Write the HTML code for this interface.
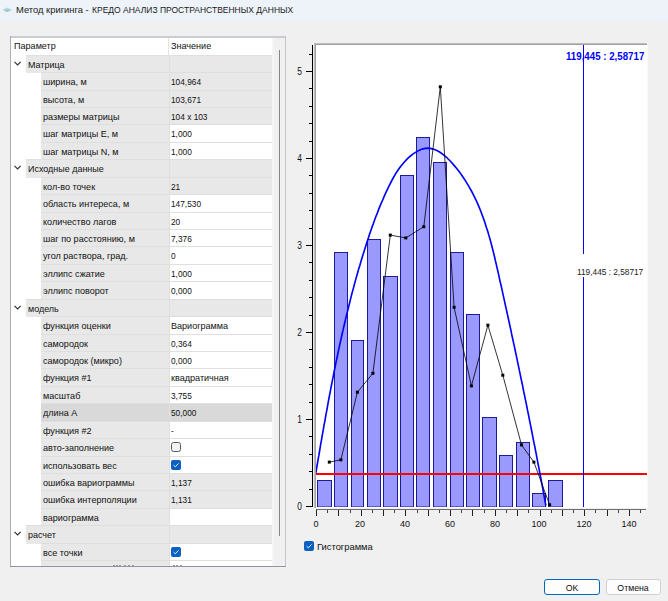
<!DOCTYPE html>
<html><head><meta charset="utf-8"><style>
*{margin:0;padding:0;box-sizing:border-box}
html,body{width:668px;height:601px;overflow:hidden;background:#f0f0f0;font-family:"Liberation Sans", sans-serif;color:#1a1a1a}
.abs{position:absolute}
.t{position:absolute;white-space:nowrap}
</style></head><body>

<div class="abs" style="left:0;top:0;width:668px;height:21px;background:#eef3f9"></div>
<svg class="abs" style="left:0;top:0" width="20" height="20"><path d="M2.6 9.7 L7.2 7.4 L11.8 9.7 L7.2 12 Z" fill="#b5d8dc"/><path d="M2.6 9.7 L11.8 9.7 L7.2 12 Z" fill="#98c6cc"/></svg>
<div class="t" style="left:16.30px;top:4.50px;font-size:9.8px;line-height:9.8px;color:#1a1a1a;font-weight:normal;transform:scaleX(0.957);transform-origin:0 0;">Метод кригинга -</div>
<div class="t" style="left:91.60px;top:4.50px;font-size:9.8px;line-height:9.8px;color:#1a1a1a;font-weight:normal;transform:scaleX(0.868);transform-origin:0 0;">КРЕДО АНАЛИЗ ПРОСТРАНСТВЕННЫХ ДАННЫХ</div>
<div class="abs" style="left:10px;top:36px;width:276px;height:531px;background:#ffffff"></div>
<div class="abs" style="left:10px;top:36px;width:276px;height:2px;background:#c9ccd1"></div>
<div class="abs" style="left:10px;top:36px;width:1px;height:531px;background:#a9acb1"></div>
<div class="abs" style="left:285px;top:36px;width:1px;height:531px;background:#c3c6cb"></div>
<div class="abs" style="left:10px;top:566px;width:276px;height:1px;background:#91959c"></div>
<div class="abs" style="left:272px;top:38px;width:13px;height:528px;background:#f0f0f0"></div>
<div class="abs" style="left:272px;top:38px;width:2px;height:528px;background:#f5f5f5"></div>
<div class="abs" style="left:279px;top:50px;width:1px;height:486px;background:#858585"></div>
<div class="abs" style="left:0;top:0;width:272px;height:566px;overflow:hidden">
<div class="abs" style="left:168px;top:38px;width:1px;height:17px;background:#e3e3e3"></div>
<div class="t" style="left:13.60px;top:41.00px;font-size:9.8px;line-height:9.8px;color:#111;font-weight:normal;transform:scaleX(0.925);transform-origin:0 0;">Параметр</div>
<div class="t" style="left:171.00px;top:41.00px;font-size:9.8px;line-height:9.8px;color:#111;font-weight:normal;transform:scaleX(0.925);transform-origin:0 0;">Значение</div>
<div class="abs" style="left:26px;top:55px;width:246px;height:1px;background:#dfdfdf"></div>
<div class="abs" style="left:26px;top:56px;width:143px;height:16px;background:#e8e8e8"></div>
<div class="abs" style="left:26px;top:72px;width:15px;height:1px;background:#e8e8e8"></div>
<div class="abs" style="left:169px;top:55px;width:1px;height:17px;background:#dfdfdf"></div>
<div class="abs" style="left:170px;top:56px;width:102px;height:16px;background:#e8e8e8"></div>
<svg class="abs" style="left:13px;top:60px" width="10" height="8"><path d="M1.5 1.8 L4.6 4.9 L7.7 1.8" stroke="#333" stroke-width="1.2" fill="none"/></svg>
<div class="t" style="left:27.90px;top:59.60px;font-size:9.8px;line-height:9.8px;color:#111;font-weight:normal;transform:scaleX(0.915);transform-origin:0 0;">Матрица</div>
<div class="abs" style="left:41px;top:72px;width:231px;height:1px;background:#dfdfdf"></div>
<div class="abs" style="left:41px;top:73px;width:128px;height:17px;background:#e8e8e8"></div>
<div class="abs" style="left:169px;top:72px;width:1px;height:18px;background:#dfdfdf"></div>
<div class="abs" style="left:170px;top:73px;width:102px;height:17px;background:#e8e8e8"></div>
<div class="t" style="left:43.00px;top:76.60px;font-size:9.8px;line-height:9.8px;color:#111;font-weight:normal;transform:scaleX(0.925);transform-origin:0 0;">ширина, м</div>
<div class="t" style="left:171.30px;top:76.60px;font-size:9.8px;line-height:9.8px;color:#111;font-weight:normal;transform:scaleX(0.848);transform-origin:0 0;">104,964</div>
<div class="abs" style="left:41px;top:90px;width:231px;height:1px;background:#dfdfdf"></div>
<div class="abs" style="left:41px;top:91px;width:128px;height:16px;background:#e8e8e8"></div>
<div class="abs" style="left:169px;top:90px;width:1px;height:17px;background:#dfdfdf"></div>
<div class="abs" style="left:170px;top:91px;width:102px;height:16px;background:#e8e8e8"></div>
<div class="t" style="left:43.00px;top:94.60px;font-size:9.8px;line-height:9.8px;color:#111;font-weight:normal;transform:scaleX(0.925);transform-origin:0 0;">высота, м</div>
<div class="t" style="left:171.30px;top:94.60px;font-size:9.8px;line-height:9.8px;color:#111;font-weight:normal;transform:scaleX(0.848);transform-origin:0 0;">103,671</div>
<div class="abs" style="left:41px;top:107px;width:231px;height:1px;background:#dfdfdf"></div>
<div class="abs" style="left:41px;top:108px;width:128px;height:16px;background:#e8e8e8"></div>
<div class="abs" style="left:169px;top:107px;width:1px;height:17px;background:#dfdfdf"></div>
<div class="abs" style="left:170px;top:108px;width:102px;height:16px;background:#e8e8e8"></div>
<div class="t" style="left:43.00px;top:111.60px;font-size:9.8px;line-height:9.8px;color:#111;font-weight:normal;transform:scaleX(0.925);transform-origin:0 0;">размеры матрицы</div>
<div class="t" style="left:171.30px;top:111.60px;font-size:9.8px;line-height:9.8px;color:#111;font-weight:normal;transform:scaleX(0.848);transform-origin:0 0;">104 x 103</div>
<div class="abs" style="left:41px;top:124px;width:231px;height:1px;background:#dfdfdf"></div>
<div class="abs" style="left:41px;top:125px;width:128px;height:17px;background:#e8e8e8"></div>
<div class="abs" style="left:169px;top:124px;width:1px;height:18px;background:#dfdfdf"></div>
<div class="abs" style="left:170px;top:125px;width:102px;height:17px;background:#ffffff"></div>
<div class="t" style="left:43.00px;top:128.60px;font-size:9.8px;line-height:9.8px;color:#111;font-weight:normal;transform:scaleX(0.925);transform-origin:0 0;">шаг матрицы E, м</div>
<div class="t" style="left:171.30px;top:128.60px;font-size:9.8px;line-height:9.8px;color:#111;font-weight:normal;transform:scaleX(0.848);transform-origin:0 0;">1,000</div>
<div class="abs" style="left:41px;top:142px;width:231px;height:1px;background:#dfdfdf"></div>
<div class="abs" style="left:41px;top:143px;width:128px;height:16px;background:#e8e8e8"></div>
<div class="abs" style="left:169px;top:142px;width:1px;height:17px;background:#dfdfdf"></div>
<div class="abs" style="left:170px;top:143px;width:102px;height:16px;background:#ffffff"></div>
<div class="t" style="left:43.00px;top:146.60px;font-size:9.8px;line-height:9.8px;color:#111;font-weight:normal;transform:scaleX(0.925);transform-origin:0 0;">шаг матрицы N, м</div>
<div class="t" style="left:171.30px;top:146.60px;font-size:9.8px;line-height:9.8px;color:#111;font-weight:normal;transform:scaleX(0.848);transform-origin:0 0;">1,000</div>
<div class="abs" style="left:26px;top:159px;width:246px;height:1px;background:#dfdfdf"></div>
<div class="abs" style="left:26px;top:160px;width:143px;height:17px;background:#e8e8e8"></div>
<div class="abs" style="left:26px;top:177px;width:15px;height:1px;background:#e8e8e8"></div>
<div class="abs" style="left:169px;top:159px;width:1px;height:18px;background:#dfdfdf"></div>
<div class="abs" style="left:170px;top:160px;width:102px;height:17px;background:#e8e8e8"></div>
<svg class="abs" style="left:13px;top:164px" width="10" height="8"><path d="M1.5 1.8 L4.6 4.9 L7.7 1.8" stroke="#333" stroke-width="1.2" fill="none"/></svg>
<div class="t" style="left:27.90px;top:163.60px;font-size:9.8px;line-height:9.8px;color:#111;font-weight:normal;transform:scaleX(0.915);transform-origin:0 0;">Исходные данные</div>
<div class="abs" style="left:41px;top:177px;width:231px;height:1px;background:#dfdfdf"></div>
<div class="abs" style="left:41px;top:178px;width:128px;height:16px;background:#e8e8e8"></div>
<div class="abs" style="left:169px;top:177px;width:1px;height:17px;background:#dfdfdf"></div>
<div class="abs" style="left:170px;top:178px;width:102px;height:16px;background:#e8e8e8"></div>
<div class="t" style="left:43.00px;top:181.60px;font-size:9.8px;line-height:9.8px;color:#111;font-weight:normal;transform:scaleX(0.925);transform-origin:0 0;">кол-во точек</div>
<div class="t" style="left:171.30px;top:181.60px;font-size:9.8px;line-height:9.8px;color:#111;font-weight:normal;transform:scaleX(0.848);transform-origin:0 0;">21</div>
<div class="abs" style="left:41px;top:194px;width:231px;height:1px;background:#dfdfdf"></div>
<div class="abs" style="left:41px;top:195px;width:128px;height:17px;background:#e8e8e8"></div>
<div class="abs" style="left:169px;top:194px;width:1px;height:18px;background:#dfdfdf"></div>
<div class="abs" style="left:170px;top:195px;width:102px;height:17px;background:#ffffff"></div>
<div class="t" style="left:43.00px;top:198.60px;font-size:9.8px;line-height:9.8px;color:#111;font-weight:normal;transform:scaleX(0.925);transform-origin:0 0;">область интереса, м</div>
<div class="t" style="left:171.30px;top:198.60px;font-size:9.8px;line-height:9.8px;color:#111;font-weight:normal;transform:scaleX(0.848);transform-origin:0 0;">147,530</div>
<div class="abs" style="left:41px;top:212px;width:231px;height:1px;background:#dfdfdf"></div>
<div class="abs" style="left:41px;top:213px;width:128px;height:16px;background:#e8e8e8"></div>
<div class="abs" style="left:169px;top:212px;width:1px;height:17px;background:#dfdfdf"></div>
<div class="abs" style="left:170px;top:213px;width:102px;height:16px;background:#ffffff"></div>
<div class="t" style="left:43.00px;top:216.60px;font-size:9.8px;line-height:9.8px;color:#111;font-weight:normal;transform:scaleX(0.925);transform-origin:0 0;">количество лагов</div>
<div class="t" style="left:171.30px;top:216.60px;font-size:9.8px;line-height:9.8px;color:#111;font-weight:normal;transform:scaleX(0.848);transform-origin:0 0;">20</div>
<div class="abs" style="left:41px;top:229px;width:231px;height:1px;background:#dfdfdf"></div>
<div class="abs" style="left:41px;top:230px;width:128px;height:16px;background:#e8e8e8"></div>
<div class="abs" style="left:169px;top:229px;width:1px;height:17px;background:#dfdfdf"></div>
<div class="abs" style="left:170px;top:230px;width:102px;height:16px;background:#ffffff"></div>
<div class="t" style="left:43.00px;top:233.60px;font-size:9.8px;line-height:9.8px;color:#111;font-weight:normal;transform:scaleX(0.925);transform-origin:0 0;">шаг по расстоянию, м</div>
<div class="t" style="left:171.30px;top:233.60px;font-size:9.8px;line-height:9.8px;color:#111;font-weight:normal;transform:scaleX(0.848);transform-origin:0 0;">7,376</div>
<div class="abs" style="left:41px;top:246px;width:231px;height:1px;background:#dfdfdf"></div>
<div class="abs" style="left:41px;top:247px;width:128px;height:17px;background:#e8e8e8"></div>
<div class="abs" style="left:169px;top:246px;width:1px;height:18px;background:#dfdfdf"></div>
<div class="abs" style="left:170px;top:247px;width:102px;height:17px;background:#ffffff"></div>
<div class="t" style="left:43.00px;top:250.60px;font-size:9.8px;line-height:9.8px;color:#111;font-weight:normal;transform:scaleX(0.925);transform-origin:0 0;">угол раствора, град.</div>
<div class="t" style="left:171.30px;top:250.60px;font-size:9.8px;line-height:9.8px;color:#111;font-weight:normal;transform:scaleX(0.848);transform-origin:0 0;">0</div>
<div class="abs" style="left:41px;top:264px;width:231px;height:1px;background:#dfdfdf"></div>
<div class="abs" style="left:41px;top:265px;width:128px;height:16px;background:#e8e8e8"></div>
<div class="abs" style="left:169px;top:264px;width:1px;height:17px;background:#dfdfdf"></div>
<div class="abs" style="left:170px;top:265px;width:102px;height:16px;background:#ffffff"></div>
<div class="t" style="left:43.00px;top:268.60px;font-size:9.8px;line-height:9.8px;color:#111;font-weight:normal;transform:scaleX(0.925);transform-origin:0 0;">эллипс сжатие</div>
<div class="t" style="left:171.30px;top:268.60px;font-size:9.8px;line-height:9.8px;color:#111;font-weight:normal;transform:scaleX(0.848);transform-origin:0 0;">1,000</div>
<div class="abs" style="left:41px;top:281px;width:231px;height:1px;background:#dfdfdf"></div>
<div class="abs" style="left:41px;top:282px;width:128px;height:17px;background:#e8e8e8"></div>
<div class="abs" style="left:169px;top:281px;width:1px;height:18px;background:#dfdfdf"></div>
<div class="abs" style="left:170px;top:282px;width:102px;height:17px;background:#ffffff"></div>
<div class="t" style="left:43.00px;top:285.60px;font-size:9.8px;line-height:9.8px;color:#111;font-weight:normal;transform:scaleX(0.925);transform-origin:0 0;">эллипс поворот</div>
<div class="t" style="left:171.30px;top:285.60px;font-size:9.8px;line-height:9.8px;color:#111;font-weight:normal;transform:scaleX(0.848);transform-origin:0 0;">0,000</div>
<div class="abs" style="left:26px;top:299px;width:246px;height:1px;background:#dfdfdf"></div>
<div class="abs" style="left:26px;top:300px;width:143px;height:16px;background:#e8e8e8"></div>
<div class="abs" style="left:26px;top:316px;width:15px;height:1px;background:#e8e8e8"></div>
<div class="abs" style="left:169px;top:299px;width:1px;height:17px;background:#dfdfdf"></div>
<div class="abs" style="left:170px;top:300px;width:102px;height:16px;background:#e8e8e8"></div>
<svg class="abs" style="left:13px;top:304px" width="10" height="8"><path d="M1.5 1.8 L4.6 4.9 L7.7 1.8" stroke="#333" stroke-width="1.2" fill="none"/></svg>
<div class="t" style="left:27.90px;top:303.60px;font-size:9.8px;line-height:9.8px;color:#111;font-weight:normal;transform:scaleX(0.915);transform-origin:0 0;">модель</div>
<div class="abs" style="left:41px;top:316px;width:231px;height:1px;background:#dfdfdf"></div>
<div class="abs" style="left:41px;top:317px;width:128px;height:17px;background:#e8e8e8"></div>
<div class="abs" style="left:169px;top:316px;width:1px;height:18px;background:#dfdfdf"></div>
<div class="abs" style="left:170px;top:317px;width:102px;height:17px;background:#ffffff"></div>
<div class="t" style="left:43.00px;top:320.60px;font-size:9.8px;line-height:9.8px;color:#111;font-weight:normal;transform:scaleX(0.925);transform-origin:0 0;">функция оценки</div>
<div class="t" style="left:171.30px;top:320.60px;font-size:9.8px;line-height:9.8px;color:#111;font-weight:normal;transform:scaleX(0.925);transform-origin:0 0;">Вариограмма</div>
<div class="abs" style="left:41px;top:334px;width:231px;height:1px;background:#dfdfdf"></div>
<div class="abs" style="left:41px;top:335px;width:128px;height:16px;background:#e8e8e8"></div>
<div class="abs" style="left:169px;top:334px;width:1px;height:17px;background:#dfdfdf"></div>
<div class="abs" style="left:170px;top:335px;width:102px;height:16px;background:#ffffff"></div>
<div class="t" style="left:43.00px;top:338.60px;font-size:9.8px;line-height:9.8px;color:#111;font-weight:normal;transform:scaleX(0.925);transform-origin:0 0;">самородок</div>
<div class="t" style="left:171.30px;top:338.60px;font-size:9.8px;line-height:9.8px;color:#111;font-weight:normal;transform:scaleX(0.848);transform-origin:0 0;">0,364</div>
<div class="abs" style="left:41px;top:351px;width:231px;height:1px;background:#dfdfdf"></div>
<div class="abs" style="left:41px;top:352px;width:128px;height:16px;background:#e8e8e8"></div>
<div class="abs" style="left:169px;top:351px;width:1px;height:17px;background:#dfdfdf"></div>
<div class="abs" style="left:170px;top:352px;width:102px;height:16px;background:#ffffff"></div>
<div class="t" style="left:43.00px;top:355.60px;font-size:9.8px;line-height:9.8px;color:#111;font-weight:normal;transform:scaleX(0.925);transform-origin:0 0;">самородок (микро)</div>
<div class="t" style="left:171.30px;top:355.60px;font-size:9.8px;line-height:9.8px;color:#111;font-weight:normal;transform:scaleX(0.848);transform-origin:0 0;">0,000</div>
<div class="abs" style="left:41px;top:368px;width:231px;height:1px;background:#dfdfdf"></div>
<div class="abs" style="left:41px;top:369px;width:128px;height:17px;background:#e8e8e8"></div>
<div class="abs" style="left:169px;top:368px;width:1px;height:18px;background:#dfdfdf"></div>
<div class="abs" style="left:170px;top:369px;width:102px;height:17px;background:#ffffff"></div>
<div class="t" style="left:43.00px;top:372.60px;font-size:9.8px;line-height:9.8px;color:#111;font-weight:normal;transform:scaleX(0.925);transform-origin:0 0;">функция #1</div>
<div class="t" style="left:171.30px;top:372.60px;font-size:9.8px;line-height:9.8px;color:#111;font-weight:normal;transform:scaleX(0.925);transform-origin:0 0;">квадратичная</div>
<div class="abs" style="left:41px;top:386px;width:231px;height:1px;background:#dfdfdf"></div>
<div class="abs" style="left:41px;top:387px;width:128px;height:16px;background:#e8e8e8"></div>
<div class="abs" style="left:169px;top:386px;width:1px;height:17px;background:#dfdfdf"></div>
<div class="abs" style="left:170px;top:387px;width:102px;height:16px;background:#ffffff"></div>
<div class="t" style="left:43.00px;top:390.60px;font-size:9.8px;line-height:9.8px;color:#111;font-weight:normal;transform:scaleX(0.925);transform-origin:0 0;">масштаб</div>
<div class="t" style="left:171.30px;top:390.60px;font-size:9.8px;line-height:9.8px;color:#111;font-weight:normal;transform:scaleX(0.848);transform-origin:0 0;">3,755</div>
<div class="abs" style="left:41px;top:403px;width:231px;height:1px;background:#dfdfdf"></div>
<div class="abs" style="left:41px;top:404px;width:128px;height:17px;background:#d9d9d9"></div>
<div class="abs" style="left:169px;top:403px;width:1px;height:18px;background:#dfdfdf"></div>
<div class="abs" style="left:170px;top:404px;width:102px;height:17px;background:#d9d9d9"></div>
<div class="t" style="left:43.00px;top:407.60px;font-size:9.8px;line-height:9.8px;color:#111;font-weight:normal;transform:scaleX(0.925);transform-origin:0 0;">длина A</div>
<div class="t" style="left:171.30px;top:407.60px;font-size:9.8px;line-height:9.8px;color:#111;font-weight:normal;transform:scaleX(0.848);transform-origin:0 0;">50,000</div>
<div class="abs" style="left:41px;top:421px;width:231px;height:1px;background:#dfdfdf"></div>
<div class="abs" style="left:41px;top:422px;width:128px;height:16px;background:#e8e8e8"></div>
<div class="abs" style="left:169px;top:421px;width:1px;height:17px;background:#dfdfdf"></div>
<div class="abs" style="left:170px;top:422px;width:102px;height:16px;background:#ffffff"></div>
<div class="t" style="left:43.00px;top:425.60px;font-size:9.8px;line-height:9.8px;color:#111;font-weight:normal;transform:scaleX(0.925);transform-origin:0 0;">функция #2</div>
<div class="t" style="left:171.30px;top:425.60px;font-size:9.8px;line-height:9.8px;color:#111;font-weight:normal;transform:scaleX(0.848);transform-origin:0 0;">-</div>
<div class="abs" style="left:41px;top:438px;width:231px;height:1px;background:#dfdfdf"></div>
<div class="abs" style="left:41px;top:439px;width:128px;height:17px;background:#e8e8e8"></div>
<div class="abs" style="left:169px;top:438px;width:1px;height:18px;background:#dfdfdf"></div>
<div class="abs" style="left:170px;top:439px;width:102px;height:17px;background:#ffffff"></div>
<div class="t" style="left:43.00px;top:442.60px;font-size:9.8px;line-height:9.8px;color:#111;font-weight:normal;transform:scaleX(0.925);transform-origin:0 0;">авто-заполнение</div>
<svg class="abs" style="left:171px;top:442px" width="10" height="10"><rect x="0.5" y="0.5" width="9" height="9" rx="2" fill="#f3f3f3" stroke="#5a5a5a" stroke-width="1"/></svg>
<div class="abs" style="left:41px;top:456px;width:231px;height:1px;background:#dfdfdf"></div>
<div class="abs" style="left:41px;top:457px;width:128px;height:16px;background:#e8e8e8"></div>
<div class="abs" style="left:169px;top:456px;width:1px;height:17px;background:#dfdfdf"></div>
<div class="abs" style="left:170px;top:457px;width:102px;height:16px;background:#ffffff"></div>
<div class="t" style="left:43.00px;top:460.60px;font-size:9.8px;line-height:9.8px;color:#111;font-weight:normal;transform:scaleX(0.925);transform-origin:0 0;">использовать вес</div>
<svg class="abs" style="left:171px;top:460px" width="10" height="10"><rect x="0" y="0" width="10" height="10" rx="2" fill="#0b60c2"/><path d="M2.6 5.2 L4.3 6.8 L7.5 3.4" stroke="#fff" stroke-width="0.9" fill="none"/></svg>
<div class="abs" style="left:41px;top:473px;width:231px;height:1px;background:#dfdfdf"></div>
<div class="abs" style="left:41px;top:474px;width:128px;height:16px;background:#e8e8e8"></div>
<div class="abs" style="left:169px;top:473px;width:1px;height:17px;background:#dfdfdf"></div>
<div class="abs" style="left:170px;top:474px;width:102px;height:16px;background:#e8e8e8"></div>
<div class="t" style="left:43.00px;top:477.60px;font-size:9.8px;line-height:9.8px;color:#111;font-weight:normal;transform:scaleX(0.925);transform-origin:0 0;">ошибка вариограммы</div>
<div class="t" style="left:171.30px;top:477.60px;font-size:9.8px;line-height:9.8px;color:#111;font-weight:normal;transform:scaleX(0.848);transform-origin:0 0;">1,137</div>
<div class="abs" style="left:41px;top:490px;width:231px;height:1px;background:#dfdfdf"></div>
<div class="abs" style="left:41px;top:491px;width:128px;height:17px;background:#e8e8e8"></div>
<div class="abs" style="left:169px;top:490px;width:1px;height:18px;background:#dfdfdf"></div>
<div class="abs" style="left:170px;top:491px;width:102px;height:17px;background:#e8e8e8"></div>
<div class="t" style="left:43.00px;top:494.60px;font-size:9.8px;line-height:9.8px;color:#111;font-weight:normal;transform:scaleX(0.925);transform-origin:0 0;">ошибка интерполяции</div>
<div class="t" style="left:171.30px;top:494.60px;font-size:9.8px;line-height:9.8px;color:#111;font-weight:normal;transform:scaleX(0.848);transform-origin:0 0;">1,131</div>
<div class="abs" style="left:41px;top:508px;width:231px;height:1px;background:#dfdfdf"></div>
<div class="abs" style="left:41px;top:509px;width:128px;height:16px;background:#e8e8e8"></div>
<div class="abs" style="left:169px;top:508px;width:1px;height:17px;background:#dfdfdf"></div>
<div class="abs" style="left:170px;top:509px;width:102px;height:16px;background:#ffffff"></div>
<div class="t" style="left:43.00px;top:512.60px;font-size:9.8px;line-height:9.8px;color:#111;font-weight:normal;transform:scaleX(0.925);transform-origin:0 0;">вариограмма</div>
<div class="abs" style="left:26px;top:525px;width:246px;height:1px;background:#dfdfdf"></div>
<div class="abs" style="left:26px;top:526px;width:143px;height:17px;background:#e8e8e8"></div>
<div class="abs" style="left:26px;top:543px;width:15px;height:1px;background:#e8e8e8"></div>
<div class="abs" style="left:169px;top:525px;width:1px;height:18px;background:#dfdfdf"></div>
<div class="abs" style="left:170px;top:526px;width:102px;height:17px;background:#e8e8e8"></div>
<svg class="abs" style="left:13px;top:530px" width="10" height="8"><path d="M1.5 1.8 L4.6 4.9 L7.7 1.8" stroke="#333" stroke-width="1.2" fill="none"/></svg>
<div class="t" style="left:27.90px;top:529.60px;font-size:9.8px;line-height:9.8px;color:#111;font-weight:normal;transform:scaleX(0.915);transform-origin:0 0;">расчет</div>
<div class="abs" style="left:41px;top:543px;width:231px;height:1px;background:#dfdfdf"></div>
<div class="abs" style="left:41px;top:544px;width:128px;height:16px;background:#e8e8e8"></div>
<div class="abs" style="left:169px;top:543px;width:1px;height:17px;background:#dfdfdf"></div>
<div class="abs" style="left:170px;top:544px;width:102px;height:16px;background:#ffffff"></div>
<div class="t" style="left:43.00px;top:547.60px;font-size:9.8px;line-height:9.8px;color:#111;font-weight:normal;transform:scaleX(0.925);transform-origin:0 0;">все точки</div>
<svg class="abs" style="left:171px;top:547px" width="10" height="10"><rect x="0" y="0" width="10" height="10" rx="2" fill="#0b60c2"/><path d="M2.6 5.2 L4.3 6.8 L7.5 3.4" stroke="#fff" stroke-width="0.9" fill="none"/></svg>
<div class="abs" style="left:41px;top:560px;width:231px;height:1px;background:#dfdfdf"></div>
<div class="abs" style="left:41px;top:561px;width:128px;height:5px;background:#e8e8e8"></div>
<div class="abs" style="left:169px;top:560px;width:1px;height:6px;background:#dfdfdf"></div>
<div class="abs" style="left:170px;top:561px;width:102px;height:5px;background:#ffffff"></div>
</div>
<div class="abs" style="left:113px;top:565px;width:2px;height:1px;background:#9a9a9a"></div>
<div class="abs" style="left:116px;top:565px;width:2px;height:1px;background:#9a9a9a"></div>
<div class="abs" style="left:119px;top:565px;width:2px;height:1px;background:#9a9a9a"></div>
<div class="abs" style="left:124px;top:565px;width:2px;height:1px;background:#9a9a9a"></div>
<div class="abs" style="left:128px;top:565px;width:2px;height:1px;background:#9a9a9a"></div>
<div class="abs" style="left:132px;top:565px;width:2px;height:1px;background:#9a9a9a"></div>
<div class="abs" style="left:173px;top:565px;width:2px;height:1px;background:#9a9a9a"></div>
<div class="abs" style="left:176px;top:565px;width:2px;height:1px;background:#9a9a9a"></div>
<div class="abs" style="left:180px;top:565px;width:2px;height:1px;background:#9a9a9a"></div>
<svg class="abs" style="left:0;top:0" width="668" height="601"><g shape-rendering="crispEdges"><rect x="314" y="43" width="333" height="465" fill="#bcbcbc"/><rect x="315" y="44" width="332" height="464" fill="#a2a2a2"/><rect x="316" y="45" width="332" height="463" fill="#ffffff"/><rect x="647" y="43" width="1" height="465" fill="#fafafa"/><rect x="317" y="480" width="15" height="27" fill="#1c1c96"/><rect x="318" y="481" width="13" height="25" fill="#9999fe"/><rect x="318" y="506" width="13" height="1" fill="#5a5ac6"/><rect x="334" y="252" width="14" height="255" fill="#1c1c96"/><rect x="335" y="253" width="12" height="253" fill="#9999fe"/><rect x="335" y="506" width="12" height="1" fill="#5a5ac6"/><rect x="351" y="340" width="13" height="167" fill="#1c1c96"/><rect x="352" y="341" width="11" height="165" fill="#9999fe"/><rect x="352" y="506" width="11" height="1" fill="#5a5ac6"/><rect x="367" y="239" width="14" height="268" fill="#1c1c96"/><rect x="368" y="240" width="12" height="266" fill="#9999fe"/><rect x="368" y="506" width="12" height="1" fill="#5a5ac6"/><rect x="383" y="276" width="15" height="231" fill="#1c1c96"/><rect x="384" y="277" width="13" height="229" fill="#9999fe"/><rect x="384" y="506" width="13" height="1" fill="#5a5ac6"/><rect x="400" y="175" width="14" height="332" fill="#1c1c96"/><rect x="401" y="176" width="12" height="330" fill="#9999fe"/><rect x="401" y="506" width="12" height="1" fill="#5a5ac6"/><rect x="416" y="137" width="14" height="370" fill="#1c1c96"/><rect x="417" y="138" width="12" height="368" fill="#9999fe"/><rect x="417" y="506" width="12" height="1" fill="#5a5ac6"/><rect x="433" y="162" width="14" height="345" fill="#1c1c96"/><rect x="434" y="163" width="12" height="343" fill="#9999fe"/><rect x="434" y="506" width="12" height="1" fill="#5a5ac6"/><rect x="450" y="252" width="14" height="255" fill="#1c1c96"/><rect x="451" y="253" width="12" height="253" fill="#9999fe"/><rect x="451" y="506" width="12" height="1" fill="#5a5ac6"/><rect x="466" y="314" width="14" height="193" fill="#1c1c96"/><rect x="467" y="315" width="12" height="191" fill="#9999fe"/><rect x="467" y="506" width="12" height="1" fill="#5a5ac6"/><rect x="482" y="417" width="15" height="90" fill="#1c1c96"/><rect x="483" y="418" width="13" height="88" fill="#9999fe"/><rect x="483" y="506" width="13" height="1" fill="#5a5ac6"/><rect x="499" y="455" width="14" height="52" fill="#1c1c96"/><rect x="500" y="456" width="12" height="50" fill="#9999fe"/><rect x="500" y="506" width="12" height="1" fill="#5a5ac6"/><rect x="516" y="442" width="14" height="65" fill="#1c1c96"/><rect x="517" y="443" width="12" height="63" fill="#9999fe"/><rect x="517" y="506" width="12" height="1" fill="#5a5ac6"/><rect x="532" y="493" width="14" height="14" fill="#1c1c96"/><rect x="533" y="494" width="12" height="12" fill="#9999fe"/><rect x="533" y="506" width="12" height="1" fill="#5a5ac6"/><rect x="548" y="480" width="15" height="27" fill="#1c1c96"/><rect x="549" y="481" width="13" height="25" fill="#9999fe"/><rect x="549" y="506" width="13" height="1" fill="#5a5ac6"/><rect x="316" y="473" width="331" height="2" fill="#ff0000"/><rect x="583" y="45" width="1" height="462" fill="#0000ff"/></g><defs><clipPath id="pc"><rect x="316" y="45" width="331" height="462"/></clipPath></defs><polyline clip-path="url(#pc)" points="315.8,473.3 316.4,469.7 317.0,466.0 317.6,462.4 318.2,458.8 318.9,455.2 319.5,451.5 320.1,447.9 320.7,444.2 321.4,440.6 322.0,436.9 322.6,433.3 323.3,429.6 323.9,425.9 324.6,422.3 325.3,418.6 325.9,414.9 326.6,411.3 327.3,407.6 327.9,403.9 328.6,400.2 329.3,396.5 330.0,392.8 330.7,389.2 331.4,385.5 332.1,381.8 332.9,378.1 333.6,374.4 334.3,370.7 335.1,367.1 335.8,363.4 336.6,359.7 337.4,356.0 338.1,352.4 338.9,348.7 339.7,345.0 340.5,341.3 341.3,337.7 342.1,334.0 343.0,330.4 343.8,326.7 344.7,323.0 345.5,319.4 346.4,315.8 347.3,312.1 348.2,308.5 349.1,304.9 350.0,301.2 350.9,297.6 351.8,294.0 352.8,290.4 353.8,286.8 354.7,283.2 355.7,279.6 356.7,276.1 357.7,272.5 358.7,268.9 359.8,265.4 360.8,261.9 361.9,258.3 363.0,254.8 364.1,251.3 365.2,247.8 366.3,244.3 367.4,240.8 368.6,237.3 369.7,233.8 370.9,230.4 372.1,226.9 373.4,223.5 374.6,220.0 375.9,216.5 377.3,213.1 378.6,209.6 380.0,206.1 381.5,202.7 383.0,199.2 384.5,195.6 386.1,192.1 387.8,188.6 389.5,185.0 391.3,181.5 393.2,178.0 395.1,174.6 397.2,171.3 399.5,168.1 401.8,165.0 404.4,162.0 407.0,159.1 409.9,156.5 412.8,154.1 415.9,152.1 419.0,150.4 422.1,149.1 425.2,148.4 428.4,148.2 431.4,148.6 434.5,149.5 437.4,150.8 440.4,152.5 443.2,154.6 446.0,156.9 448.7,159.5 451.4,162.2 453.9,165.1 456.3,168.0 458.7,171.1 460.9,174.1 463.1,177.2 465.2,180.4 467.2,183.6 469.1,186.8 470.9,190.0 472.7,193.3 474.3,196.7 476.0,200.0 477.5,203.4 479.0,206.9 480.4,210.3 481.7,213.8 483.0,217.3 484.3,220.8 485.5,224.4 486.6,228.0 487.8,231.5 488.8,235.1 489.9,238.8 490.9,242.4 491.8,246.0 492.8,249.7 493.7,253.4 494.6,257.0 495.4,260.7 496.3,264.4 497.1,268.1 498.0,271.7 498.8,275.4 499.6,279.1 500.4,282.8 501.3,286.4 502.1,290.1 502.9,293.8 503.7,297.4 504.5,301.1 505.3,304.7 506.1,308.4 506.9,312.0 507.7,315.7 508.5,319.3 509.3,323.0 510.1,326.6 510.9,330.2 511.6,333.9 512.4,337.5 513.2,341.1 514.0,344.8 514.8,348.4 515.5,352.0 516.3,355.7 517.1,359.3 517.8,362.9 518.6,366.6 519.3,370.2 520.1,373.8 520.8,377.4 521.6,381.1 522.4,384.7 523.1,388.3 523.8,392.0 524.6,395.6 525.3,399.2 526.1,402.9 526.8,406.5 527.5,410.1 528.3,413.8 529.0,417.4 529.7,421.0 530.4,424.7 531.2,428.3 531.9,432.0 532.6,435.6 533.3,439.3 534.0,443.0 534.8,446.6 535.5,450.3 536.2,453.9 536.9,457.6 537.6,461.3 538.3,465.0 539.0,468.6 539.7,472.3 540.4,476.0 541.1,479.7 541.8,483.4 542.5,487.1 543.2,490.8 543.8,494.5 544.5,498.2 545.2,502.0 545.9,505.7" fill="none" stroke="#0000ff" stroke-width="1.65"/><polyline points="329.30,462.10 340.90,459.80 357.40,392.20 372.90,373.30 390.30,235.10 405.80,237.90 423.80,226.70 440.30,86.80 454.10,307.30 471.40,385.90 487.90,325.20 502.80,375.20 521.50,444.90 533.90,462.10 549.60,504.80" fill="none" stroke="#000" stroke-width="0.8"/><rect x="327.80" y="460.60" width="3" height="3" fill="#000"/><rect x="339.40" y="458.30" width="3" height="3" fill="#000"/><rect x="355.90" y="390.70" width="3" height="3" fill="#000"/><rect x="371.40" y="371.80" width="3" height="3" fill="#000"/><rect x="388.80" y="233.60" width="3" height="3" fill="#000"/><rect x="404.30" y="236.40" width="3" height="3" fill="#000"/><rect x="422.30" y="225.20" width="3" height="3" fill="#000"/><rect x="438.80" y="85.30" width="3" height="3" fill="#000"/><rect x="452.60" y="305.80" width="3" height="3" fill="#000"/><rect x="469.90" y="384.40" width="3" height="3" fill="#000"/><rect x="486.40" y="323.70" width="3" height="3" fill="#000"/><rect x="501.30" y="373.70" width="3" height="3" fill="#000"/><rect x="520.00" y="443.40" width="3" height="3" fill="#000"/><rect x="532.40" y="460.60" width="3" height="3" fill="#000"/><rect x="548.10" y="503.30" width="3" height="3" fill="#000"/><rect x="575" y="254" width="71" height="23" fill="#fff"/></svg>
<div class="t" style="left:577.00px;top:267.10px;font-size:9.8px;line-height:9.8px;color:#222;font-weight:normal;transform:scaleX(0.846);transform-origin:0 0;">119,445 : 2,58717</div>
<div class="t" style="left:565.60px;top:51.50px;font-size:10.4px;line-height:10.4px;color:#0000ff;font-weight:bold;transform:scaleX(0.935);transform-origin:0 0;">119,445 : 2,58717</div>
<svg class="abs" style="left:0;top:0" width="668" height="601" shape-rendering="crispEdges"><rect x="312" y="45" width="1" height="462" fill="#000"/><rect x="306" y="506" width="6" height="1" fill="#000"/><rect x="309" y="489" width="3" height="1" fill="#000"/><rect x="309" y="471" width="3" height="1" fill="#000"/><rect x="309" y="454" width="3" height="1" fill="#000"/><rect x="309" y="436" width="3" height="1" fill="#000"/><rect x="306" y="419" width="6" height="1" fill="#000"/><rect x="309" y="402" width="3" height="1" fill="#000"/><rect x="309" y="384" width="3" height="1" fill="#000"/><rect x="309" y="367" width="3" height="1" fill="#000"/><rect x="309" y="349" width="3" height="1" fill="#000"/><rect x="306" y="332" width="6" height="1" fill="#000"/><rect x="309" y="315" width="3" height="1" fill="#000"/><rect x="309" y="297" width="3" height="1" fill="#000"/><rect x="309" y="280" width="3" height="1" fill="#000"/><rect x="309" y="262" width="3" height="1" fill="#000"/><rect x="306" y="245" width="6" height="1" fill="#000"/><rect x="309" y="228" width="3" height="1" fill="#000"/><rect x="309" y="210" width="3" height="1" fill="#000"/><rect x="309" y="193" width="3" height="1" fill="#000"/><rect x="309" y="175" width="3" height="1" fill="#000"/><rect x="306" y="158" width="6" height="1" fill="#000"/><rect x="309" y="141" width="3" height="1" fill="#000"/><rect x="309" y="123" width="3" height="1" fill="#000"/><rect x="309" y="106" width="3" height="1" fill="#000"/><rect x="309" y="88" width="3" height="1" fill="#000"/><rect x="306" y="71" width="6" height="1" fill="#000"/><rect x="309" y="54" width="3" height="1" fill="#000"/><rect x="316" y="509" width="330" height="1" fill="#6e6e6e"/><rect x="316" y="510" width="1" height="6" fill="#222"/><rect x="327" y="510" width="1" height="3" fill="#444"/><rect x="338" y="510" width="1" height="6" fill="#222"/><rect x="350" y="510" width="1" height="3" fill="#444"/><rect x="361" y="510" width="1" height="6" fill="#222"/><rect x="372" y="510" width="1" height="3" fill="#444"/><rect x="383" y="510" width="1" height="6" fill="#222"/><rect x="394" y="510" width="1" height="3" fill="#444"/><rect x="405" y="510" width="1" height="6" fill="#222"/><rect x="417" y="510" width="1" height="3" fill="#444"/><rect x="428" y="510" width="1" height="6" fill="#222"/><rect x="439" y="510" width="1" height="3" fill="#444"/><rect x="450" y="510" width="1" height="6" fill="#222"/><rect x="461" y="510" width="1" height="3" fill="#444"/><rect x="472" y="510" width="1" height="6" fill="#222"/><rect x="484" y="510" width="1" height="3" fill="#444"/><rect x="495" y="510" width="1" height="6" fill="#222"/><rect x="506" y="510" width="1" height="3" fill="#444"/><rect x="517" y="510" width="1" height="6" fill="#222"/><rect x="528" y="510" width="1" height="3" fill="#444"/><rect x="540" y="510" width="1" height="6" fill="#222"/><rect x="551" y="510" width="1" height="3" fill="#444"/><rect x="562" y="510" width="1" height="6" fill="#222"/><rect x="573" y="510" width="1" height="3" fill="#444"/><rect x="584" y="510" width="1" height="6" fill="#222"/><rect x="595" y="510" width="1" height="3" fill="#444"/><rect x="607" y="510" width="1" height="6" fill="#222"/><rect x="618" y="510" width="1" height="3" fill="#444"/><rect x="629" y="510" width="1" height="6" fill="#222"/><rect x="640" y="510" width="1" height="3" fill="#444"/></svg>
<div class="t" style="left:222.20px;width:80px;text-align:right;top:501.77px;font-size:10.2px;line-height:10.2px;color:#111;font-weight:normal;transform:scaleX(0.82);transform-origin:100% 0;">0</div>
<div class="t" style="left:222.20px;width:80px;text-align:right;top:414.77px;font-size:10.2px;line-height:10.2px;color:#111;font-weight:normal;transform:scaleX(0.82);transform-origin:100% 0;">1</div>
<div class="t" style="left:222.20px;width:80px;text-align:right;top:327.77px;font-size:10.2px;line-height:10.2px;color:#111;font-weight:normal;transform:scaleX(0.82);transform-origin:100% 0;">2</div>
<div class="t" style="left:222.20px;width:80px;text-align:right;top:240.77px;font-size:10.2px;line-height:10.2px;color:#111;font-weight:normal;transform:scaleX(0.82);transform-origin:100% 0;">3</div>
<div class="t" style="left:222.20px;width:80px;text-align:right;top:153.77px;font-size:10.2px;line-height:10.2px;color:#111;font-weight:normal;transform:scaleX(0.82);transform-origin:100% 0;">4</div>
<div class="t" style="left:222.20px;width:80px;text-align:right;top:66.77px;font-size:10.2px;line-height:10.2px;color:#111;font-weight:normal;transform:scaleX(0.82);transform-origin:100% 0;">5</div>
<div class="t" style="left:275.70px;width:80px;text-align:center;top:518.99px;font-size:9.7px;line-height:9.7px;color:#111;font-weight:normal;transform:scaleX(0.93);transform-origin:50% 0;">0</div>
<div class="t" style="left:320.40px;width:80px;text-align:center;top:518.99px;font-size:9.7px;line-height:9.7px;color:#111;font-weight:normal;transform:scaleX(0.93);transform-origin:50% 0;">20</div>
<div class="t" style="left:365.10px;width:80px;text-align:center;top:518.99px;font-size:9.7px;line-height:9.7px;color:#111;font-weight:normal;transform:scaleX(0.93);transform-origin:50% 0;">40</div>
<div class="t" style="left:409.80px;width:80px;text-align:center;top:518.99px;font-size:9.7px;line-height:9.7px;color:#111;font-weight:normal;transform:scaleX(0.93);transform-origin:50% 0;">60</div>
<div class="t" style="left:454.50px;width:80px;text-align:center;top:518.99px;font-size:9.7px;line-height:9.7px;color:#111;font-weight:normal;transform:scaleX(0.93);transform-origin:50% 0;">80</div>
<div class="t" style="left:499.20px;width:80px;text-align:center;top:518.99px;font-size:9.7px;line-height:9.7px;color:#111;font-weight:normal;transform:scaleX(0.93);transform-origin:50% 0;">100</div>
<div class="t" style="left:543.90px;width:80px;text-align:center;top:518.99px;font-size:9.7px;line-height:9.7px;color:#111;font-weight:normal;transform:scaleX(0.93);transform-origin:50% 0;">120</div>
<div class="t" style="left:588.60px;width:80px;text-align:center;top:518.99px;font-size:9.7px;line-height:9.7px;color:#111;font-weight:normal;transform:scaleX(0.93);transform-origin:50% 0;">140</div>
<svg class="abs" style="left:304px;top:541px" width="10" height="10"><rect x="0" y="0" width="10" height="10" rx="2" fill="#0b60c2"/><path d="M2.6 5.2 L4.3 6.8 L7.5 3.4" stroke="#fff" stroke-width="0.9" fill="none"/></svg>
<div class="t" style="left:317.20px;top:542.00px;font-size:9.8px;line-height:9.8px;color:#111;font-weight:normal;transform:scaleX(0.955);transform-origin:0 0;">Гистограмма</div>
<div class="abs" style="left:544px;top:579px;width:56px;height:16px;border:1px solid #0067c0;border-radius:3px;background:#fdfdfd"></div>
<div class="t" style="left:532.00px;width:80px;text-align:center;top:582.70px;font-size:9.8px;line-height:9.8px;color:#111;font-weight:normal;transform:scaleX(0.89);transform-origin:50% 0;">OK</div>
<div class="abs" style="left:606px;top:579px;width:55px;height:16px;border:1px solid #d0d0d0;border-radius:3px;background:#fdfdfd"></div>
<div class="t" style="left:593.00px;width:80px;text-align:center;top:582.70px;font-size:9.8px;line-height:9.8px;color:#111;font-weight:normal;transform:scaleX(0.89);transform-origin:50% 0;">Отмена</div>
</body></html>
